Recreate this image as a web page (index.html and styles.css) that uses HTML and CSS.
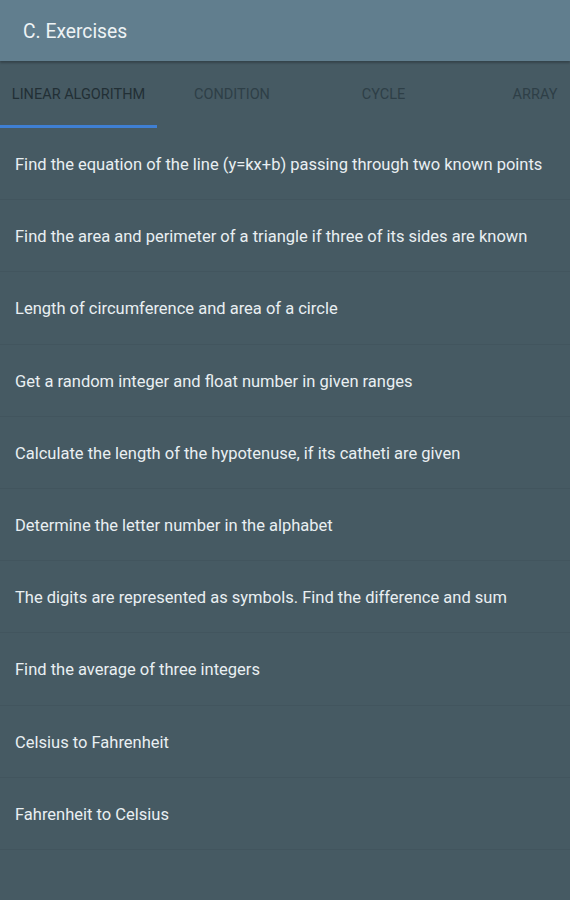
FILE: index.html
```html
<!DOCTYPE html>
<html>
<head>
<meta charset="utf-8">
<link rel="stylesheet" href="styles.css">
</head>
<body>
<div class="app">
  <header class="toolbar">C. Exercises</header>
  <nav class="tabs">
    <div class="tab active">LINEAR ALGORITHM</div>
    <div class="tab">CONDITION</div>
    <div class="tab">CYCLE</div>
    <div class="tab">ARRAY</div>
  </nav>
  <ul class="list">
    <li>Find the equation of the line (y=kx+b) passing through two known points</li>
    <li>Find the area and perimeter of a triangle if three of its sides are known</li>
    <li>Length of circumference and area of a circle</li>
    <li>Get a random integer and float number in given ranges</li>
    <li>Calculate the length of the hypotenuse, if its catheti are given</li>
    <li>Determine the letter number in the alphabet</li>
    <li>The digits are represented as symbols. Find the difference and sum</li>
    <li>Find the average of three integers</li>
    <li>Celsius to Fahrenheit</li>
    <li>Fahrenheit to Celsius</li>
  </ul>
</div>
</body>
</html>
```
FILE: styles.css
```css
* { box-sizing: border-box; }
html, body {
  margin: 0;
  padding: 0;
  background: #465a63;
  font-family: Roboto, "Liberation Sans", sans-serif;
}
.app {
  width: 570px;
  height: 900px;
  overflow: hidden;
  background: #465a63;
}
.toolbar {
  height: 61px;
  background: #617e8e;
  color: #eef3f5;
  font-size: 19.3px;
  padding-left: 23px;
  display: flex;
  align-items: center;
  padding-top: 2px;
  box-shadow: 0 2px 2px rgba(0,0,0,0.25);
  position: relative;
  z-index: 1;
}
.tabs {
  display: flex;
  height: 67px;
  white-space: nowrap;
}
.tab {
  flex: 0 0 auto;
  width: 153px;
  font-size: 14.5px;
  color: #2e3f47;
  display: flex;
  align-items: center;
  justify-content: center;
  padding-top: 3px;
  border-bottom: 3px solid transparent;
}
.tab:nth-child(2) { width: 150px; }
.tab:nth-child(4) { width: 150px; }
.tab.active {
  width: 157px;
  border-bottom-color: #3f7fd3;
  color: #222f35;
}
.list {
  list-style: none;
  margin: 0;
  padding: 0;
}
.list li {
  height: 72.2px;
  display: flex;
  align-items: center;
  padding-left: 15px;
  padding-top: 2px;
  color: #e9eff2;
  font-size: 16.5px;
  border-bottom: 1px solid #42555e;
}
```
